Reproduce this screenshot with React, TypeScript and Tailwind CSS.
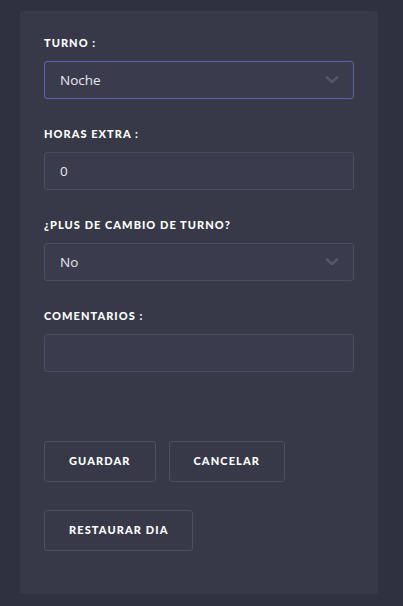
import React from "react";

const Chevron = () => (
  <svg width="14" height="9" viewBox="0 0 14 9" className="absolute right-[14px] top-1/2 -translate-y-1/2">
    <path d="M2 2 L7 6.5 L12 2" fill="none" stroke="#545769" strokeWidth="2.6" strokeLinecap="round" strokeLinejoin="round" />
  </svg>
);

const Label = ({ children }: { children: React.ReactNode }) => (
  <div className="text-[11px] leading-[16px] font-black tracking-[0.095em] text-white mb-[10px]" style={{ fontFamily: "Lato, 'Open Sans', sans-serif" }}>
    {children}
  </div>
);

const Field = ({ value, select, focused }: { value?: string; select?: boolean; focused?: boolean }) => (
  <div
    className={`relative h-[38px] rounded-[3px] border bg-[#3a3c4e] flex items-center pl-[15px] text-[13.5px] text-[#e6e8ef] ${
      focused ? "border-[#5865ad]" : "border-[#4b4e60]"
    }`}
    style={{ fontFamily: "'Open Sans', sans-serif" }}
  >
    {value}
    {select && <Chevron />}
  </div>
);

const Button = ({ children }: { children: React.ReactNode }) => (
  <div
    className="h-[41px] px-[24px] flex items-center justify-center rounded-[3px] border border-[#4b4e60] text-[11px] font-black text-white tracking-[0.1em]"
    style={{ fontFamily: "Lato, 'Open Sans', sans-serif" }}
  >
    {children}
  </div>
);

export default function App() {
  return (
    <div className="w-[403px] h-[606px] bg-[#2f3141] pt-[11px] px-[20px] pb-[12px]">
      <div className="w-[358px] h-[583px] bg-[#373949] rounded-[3px] px-[24px] pt-[24px]">
        <div className="w-[310px]">
          <Label>TURNO :</Label>
          <Field value="Noche" select focused />
          <div className="h-[27px]" />
          <Label>HORAS EXTRA :</Label>
          <Field value="0" />
          <div className="h-[27px]" />
          <Label>¿PLUS DE CAMBIO DE TURNO?</Label>
          <Field value="No" select />
          <div className="h-[27px]" />
          <Label>COMENTARIOS :</Label>
          <Field />
          <div className="h-[69px]" />
          <div className="flex gap-[13px]">
            <Button>GUARDAR</Button>
            <Button>CANCELAR</Button>
          </div>
          <div className="h-[28px]" />
          <div className="flex">
            <Button>RESTAURAR DIA</Button>
          </div>
        </div>
      </div>
    </div>
  );
}
